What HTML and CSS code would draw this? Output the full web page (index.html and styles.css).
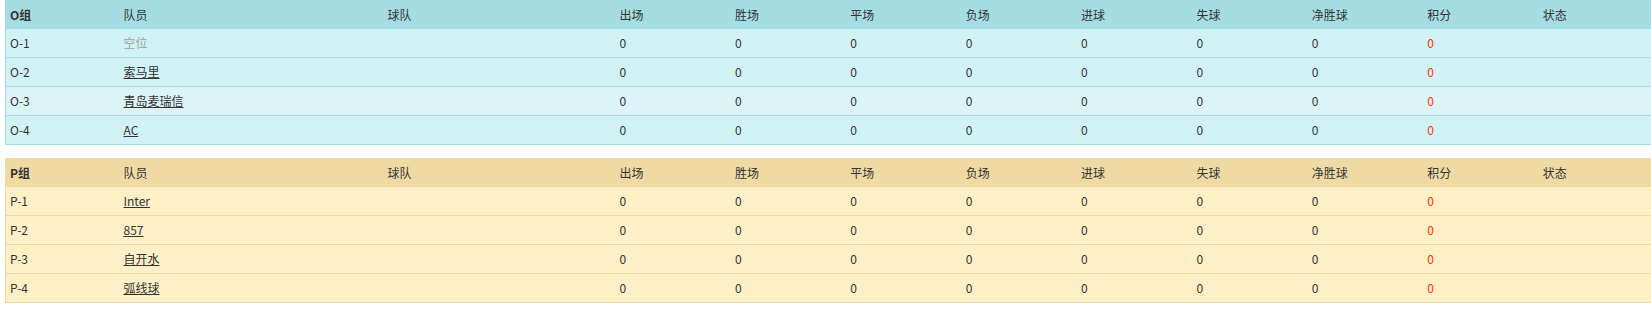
FILE: index.html
```html
<!DOCTYPE html>
<html>
<head>
<meta charset="utf-8">
<link rel="stylesheet" href="styles.css">
</head>
<body>
<div class="page">
  <table class="grp grp-o">
    <colgroup>
      <col class="c-id"><col class="c-player"><col class="c-team">
      <col class="c-n"><col class="c-n"><col class="c-n"><col class="c-n"><col class="c-n"><col class="c-n"><col class="c-n"><col class="c-n"><col class="c-n">
    </colgroup>
    <thead>
      <tr><th class="gname">O组</th><th>队员</th><th>球队</th><th>出场</th><th>胜场</th><th>平场</th><th>负场</th><th>进球</th><th>失球</th><th>净胜球</th><th>积分</th><th>状态</th></tr>
    </thead>
    <tbody>
      <tr><td>O-1</td><td class="empty">空位</td><td></td><td>0</td><td>0</td><td>0</td><td>0</td><td>0</td><td>0</td><td>0</td><td class="pts">0</td><td></td></tr>
      <tr><td>O-2</td><td><a href="#">索马里</a></td><td></td><td>0</td><td>0</td><td>0</td><td>0</td><td>0</td><td>0</td><td>0</td><td class="pts">0</td><td></td></tr>
      <tr class="alt"><td>O-3</td><td><a href="#">青岛麦瑞信</a></td><td></td><td>0</td><td>0</td><td>0</td><td>0</td><td>0</td><td>0</td><td>0</td><td class="pts">0</td><td></td></tr>
      <tr><td>O-4</td><td><a href="#">AC</a></td><td></td><td>0</td><td>0</td><td>0</td><td>0</td><td>0</td><td>0</td><td>0</td><td class="pts">0</td><td></td></tr>
    </tbody>
  </table>

  <table class="grp grp-p">
    <colgroup>
      <col class="c-id"><col class="c-player"><col class="c-team">
      <col class="c-n"><col class="c-n"><col class="c-n"><col class="c-n"><col class="c-n"><col class="c-n"><col class="c-n"><col class="c-n"><col class="c-n">
    </colgroup>
    <thead>
      <tr><th class="gname">P组</th><th>队员</th><th>球队</th><th>出场</th><th>胜场</th><th>平场</th><th>负场</th><th>进球</th><th>失球</th><th>净胜球</th><th>积分</th><th>状态</th></tr>
    </thead>
    <tbody>
      <tr><td>P-1</td><td><a href="#">Inter</a></td><td></td><td>0</td><td>0</td><td>0</td><td>0</td><td>0</td><td>0</td><td>0</td><td class="pts">0</td><td></td></tr>
      <tr><td>P-2</td><td><a href="#">857</a></td><td></td><td>0</td><td>0</td><td>0</td><td>0</td><td>0</td><td>0</td><td>0</td><td class="pts">0</td><td></td></tr>
      <tr><td>P-3</td><td><a href="#">自开水</a></td><td></td><td>0</td><td>0</td><td>0</td><td>0</td><td>0</td><td>0</td><td>0</td><td class="pts">0</td><td></td></tr>
      <tr><td>P-4</td><td><a href="#">弧线球</a></td><td></td><td>0</td><td>0</td><td>0</td><td>0</td><td>0</td><td>0</td><td>0</td><td class="pts">0</td><td></td></tr>
    </tbody>
  </table>
</div>
</body>
</html>
```
FILE: styles.css
```css
html, body {
  margin: 0;
  padding: 0;
  overflow: hidden;
  background: #ffffff;
}
.page {
  padding-left: 5px;
  font-family: "Noto Sans CJK SC", "Noto Sans", sans-serif;
  font-size: 12px;
  color: #333333;
}
.grp {
  width: 1649px;
  table-layout: fixed;
  border-collapse: collapse;
  margin-bottom: 13px;
}
.c-id { width: 114px; }
.c-player { width: 264px; }
.c-team { width: 232px; }
.c-n { width: 115.4px; }
.grp th, .grp td {
  height: 28px;
  padding: 0 0 0 4px;
  text-align: left;
  vertical-align: middle;
  font-weight: normal;
  line-height: 16px;
  white-space: nowrap;
}
.grp th { height: 29px; }
.grp th.gname { font-weight: bold; }
.grp a { color: #333333; text-decoration: underline; }
.grp .empty { color: #a0a0a0; }
.grp .pts { color: #ff3300; }

.grp-o { border-left: 1px solid #a6dbe2; }
.grp-o thead tr { background: #a6dde3; }
.grp-o tbody tr { background: #d0f2f5; border-bottom: 1px solid #a6dbe2; }
.grp-o tbody tr.alt { background: #dcf4f7; }

.grp-p { border-left: 1px solid #f0d9a2; }
.grp-p thead tr { background: #f0daa4; }
.grp-p tbody tr { background: #fdefc6; border-bottom: 1px solid #f0d9a2; }
```
